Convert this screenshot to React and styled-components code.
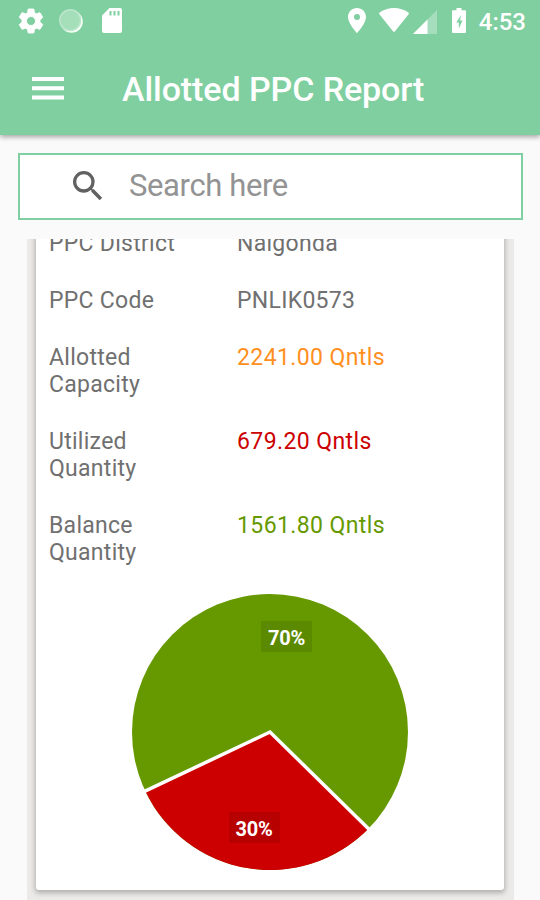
import styled, { createGlobalStyle } from "styled-components";
import { MdSearch } from "react-icons/md";

const rows = [
    { label: "PPC District", value: "Nalgonda" },
    { label: "PPC Code", value: "PNLIK0573" },
    { label: "Allotted Capacity", value: "2241.00 Qntls", color: "#ff8f1f" },
    { label: "Utilized Quantity", value: "679.20 Qntls", color: "#cc0000" },
    { label: "Balance Quantity", value: "1561.80 Qntls", color: "#669900" },
];

const GearIcon = () => (
    <svg width="30" height="30" viewBox="0 0 24 24">
        <path
            fill="currentColor"
            stroke="currentColor"
            strokeWidth=".7"
            fillRule="evenodd"
            d="M19.14 12.94c.04-.3.06-.61.06-.94 0-.32-.02-.64-.07-.94l2.03-1.58c.18-.14.23-.41.12-.61l-1.92-3.32c-.12-.22-.37-.29-.59-.22l-2.39.96c-.5-.38-1.03-.7-1.62-.94l-.36-2.54c-.04-.24-.24-.41-.48-.41h-3.84c-.24 0-.43.17-.47.41l-.36 2.54c-.59.24-1.13.57-1.62.94l-2.39-.96c-.22-.08-.47 0-.59.22L2.74 8.87c-.12.21-.08.47.12.61l2.03 1.58c-.05.3-.09.63-.09.94s.02.64.07.94l-2.03 1.58c-.18.14-.23.41-.12.61l1.92 3.32c.12.22.37.29.59.22l2.39-.96c.5.38 1.03.7 1.62.94l.36 2.54c.05.24.24.41.48.41h3.84c.24 0 .44-.17.47-.41l.36-2.54c.59-.24 1.13-.56 1.62-.94l2.39.96c.22.08.47 0 .59-.22l1.92-3.32c.12-.22.07-.47-.12-.61l-2.01-1.58zM12 15.6a3.6 3.6 0 1 1 0-7.2 3.6 3.6 0 0 1 0 7.2z"
        />
    </svg>
);

const SyncIcon = () => (
    <svg width="24" height="24" viewBox="0 0 24 24">
        <circle cx="12.6" cy="12.6" r="11.2" fill="#f6fff5" />
        <circle cx="11.2" cy="11.2" r="11.1" fill="#bce6cb" />
        <circle cx="11.2" cy="11.2" r="9.6" fill="#a4dfb9" />
    </svg>
);

const SdIcon = () => (
    <svg width="20" height="25" viewBox="0 0 20 25">
        <path
            fill="currentColor"
            fillRule="evenodd"
            d="M7.500 0H18q2 0 2 2v21q0 2-2 2H2q-2 0-2-2V7.500zM7.500 3v4.500h2V3zM11.500 3v4.500h2V3zM15.500 3v4.500h2V3z"
        />
    </svg>
);

const PinIcon = () => (
    <svg width="18" height="25" viewBox="0 0 18 25">
        <path
            fill="currentColor"
            fillRule="evenodd"
            d="M9 0C4 0 0 4 0 8.900C0 15.500 9 25 9 25S18 15.500 18 8.900C18 4 14 0 9 0zM9 5.900a3 3 0 1 1 0 6a3 3 0 0 1 0-6z"
        />
    </svg>
);

const WifiIcon = () => (
    <svg width="30" height="24" viewBox="0 0 30 24">
        <path
            fill="currentColor"
            d="M16 23.300q-1 1-2 0L.4 6.200Q-.3 5.200.6 4.500C5 1.500 9.500 0 15 0S25 1.500 29.400 4.500Q30.300 5.200 29.600 6.200z"
        />
    </svg>
);

const SignalIcon = () => (
    <svg width="24" height="24" viewBox="0 0 24 24">
        <path d="M0 24L24 0v24z" fill="#fff" opacity=".3" />
        <path d="M0 24L14.500 9.500V24z" fill="currentColor" />
    </svg>
);

const BatteryIcon = () => (
    <svg width="14" height="25" viewBox="0 0 14 25">
        <path
            fill="currentColor"
            fillRule="evenodd"
            d="M4.500 0h5v2.300H13q1 0 1 1V24q0 1-1 1H1q-1 0-1-1V3.300q0-1 1-1h3.500zM9 7L4.300 14.500h2.500v6L10.500 12.500h-2.500z"
        />
    </svg>
);

const MenuIcon = () => (
    <svg width="32" height="23" viewBox="0 0 32 23">
        <path fill="currentColor" d="M0 0h32v4H0zM0 9.300h32v4H0zM0 18.600h32v4H0z" />
    </svg>
);

const PieChart = () => (
    <Pie width="280" height="278" viewBox="-140 -139 280 278">
        <circle r="138" fill="#669900" />
        <path d="M0 0L98.500 96.700A138 138 0 0 1 -124.700 59.100z" fill="#cc0000" />
        <path d="M99.500 97.700L0 0L-126 59.700" fill="none" stroke="#fff" strokeWidth="3.500" />
        <rect x="-9" y="-111" width="51" height="31" fill="#000" opacity=".1" />
        <text x="16.500" y="-87">70%</text>
        <rect x="-41" y="80" width="51" height="31" fill="#000" opacity=".1" />
        <text x="-16" y="104">30%</text>
    </Pie>
);

const App = () => (
    <Screen>
        <GlobalStyle />
        <Header>
            <StatusBar>
                <StatusGroup $lastGap="6px">
                    <GearIcon />
                    <SyncIcon />
                    <SdIcon />
                </StatusGroup>
                <StatusGroup $lastGap="2px">
                    <PinIcon />
                    <Wifi>
                        <WifiIcon />
                        <SignalIcon />
                    </Wifi>
                    <BatteryIcon />
                    <Clock>4:53</Clock>
                </StatusGroup>
            </StatusBar>
            <Toolbar>
                <MenuIcon />
                <Title>Allotted PPC Report</Title>
            </Toolbar>
        </Header>
        <SearchBox>
            <MdSearch size={40} />
            <SearchInput placeholder="Search here" />
        </SearchBox>
        <List>
            <Card>
                {rows.map((row) => (
                    <Row key={row.label}>
                        <Label>{row.label}</Label>
                        <Value $color={row.color}>{row.value}</Value>
                    </Row>
                ))}
                <PieChart />
            </Card>
        </List>
    </Screen>
);

const GlobalStyle = createGlobalStyle`
    * {
        box-sizing: border-box;
    }

    body {
        margin: 0;
        font-family: Roboto, "Liberation Sans", sans-serif;
    }

    svg {
        display: block;
        flex-shrink: 0;
    }
`;

const Screen = styled.div`
    display: flex;
    flex-direction: column;
    height: 900px;
    overflow: hidden;
    background: #fafafa;
`;

const Header = styled.header`
    height: 135px;
    flex-shrink: 0;
    background: #80cfa1;
    color: #fff;
    box-shadow: 0 2px 5px rgba(0, 0, 0, 0.35);
`;

const StatusBar = styled.div`
    display: flex;
    justify-content: space-between;
    height: 41px;
    padding: 0 14px 0 16px;
`;

const StatusGroup = styled.div`
    display: flex;
    align-items: center;
    gap: 13px;

    > svg:nth-child(3) {
        margin-left: ${(props) => props.$lastGap};
    }
`;

const Wifi = styled.div`
    display: flex;
    gap: 4px;

    svg + svg {
        margin-top: 2px;
    }
`;

const Clock = styled.span`
    font-size: 24px;
    font-weight: 500;
    line-height: 28px;
    padding-top: 2px;
`;

const Toolbar = styled.div`
    display: flex;
    align-items: center;
    height: 95px;
    padding: 0 32px;
`;

const Title = styled.h1`
    margin: 0 0 0 58px;
    font-size: 34px;
    font-weight: 500;
    line-height: 40px;
    letter-spacing: -0.08px;
    white-space: nowrap;
`;

const SearchBox = styled.div`
    display: flex;
    align-items: center;
    flex-shrink: 0;
    height: 67px;
    margin: 18px 17px 0 18px;
    padding: 0 0 2px 48px;
    border: 2px solid #80cfa1;
    background: #fff;
    color: #616161;
`;

const SearchInput = styled.input`
    flex: 1;
    min-width: 0;
    margin-left: 21px;
    padding: 0;
    border: 0;
    outline: 0;
    background: none;
    font-family: inherit;
    font-size: 31px;
    letter-spacing: -0.38px;

    &::placeholder {
        color: #939393;
        opacity: 1;
    }
`;

const List = styled.main`
    display: flex;
    flex-direction: column;
    justify-content: flex-end;
    flex: 1;
    min-height: 0;
    margin: 19px 26px 0 27px;
    padding: 0 10px 10px 9px;
    overflow: hidden;
    background: #ebeae9;
`;

const Card = styled.section`
    flex-shrink: 0;
    padding: 10px 13px 19px;
    border-radius: 3px;
    background: #fff;
    box-shadow: 0 2px 5px 1px rgba(0, 0, 0, 0.25);
`;

const Row = styled.div`
    display: grid;
    grid-template-columns: 120px 1fr;
    column-gap: 68px;
    margin-bottom: 30px;
    color: #707070;
    font-size: 23px;
    line-height: 27px;
    letter-spacing: 0.28px;
`;

const Label = styled.span`
    white-space: ${(props) => (props.children.startsWith("PPC") ? "nowrap" : "normal")};
`;

const Value = styled.span`
    color: ${(props) => props.$color || "inherit"};
    letter-spacing: ${(props) => (props.$color ? "0.4px" : "0.28px")};
`;

const Pie = styled.svg`
    margin: -3px auto 0;

    text {
        fill: #fff;
        font-size: 20px;
        font-weight: 700;
        letter-spacing: -0.3px;
        text-anchor: middle;
    }
`;

export default App;
